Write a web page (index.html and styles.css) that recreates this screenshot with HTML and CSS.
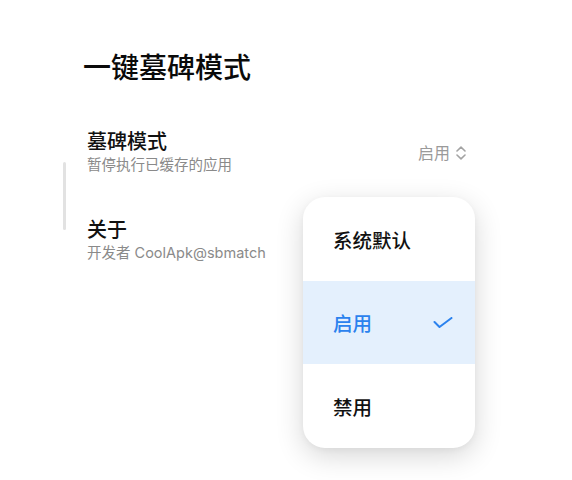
FILE: index.html
```html
<!DOCTYPE html>
<html lang="zh-CN">
<head>
<meta charset="utf-8">
<title>一键墓碑模式</title>
<link rel="stylesheet" href="styles.css">
</head>
<body>
<div class="page">
  <h1 class="title">一键墓碑模式</h1>
  <div class="list">
    <div class="row">
      <div class="row-text">
        <div class="row-title">墓碑模式</div>
        <div class="row-sub">暂停执行已缓存的应用</div>
      </div>
      <div class="row-value">
        <span>启用</span>
        <svg class="updown" width="10" height="14" viewBox="0 0 10 14"><path d="M1 5 L5 1.2 L9 5 M1 9 L5 12.8 L9 9" fill="none" stroke="#a3a3a3" stroke-width="1.6" stroke-linecap="round" stroke-linejoin="round"/></svg>
      </div>
    </div>
    <div class="row">
      <div class="row-text">
        <div class="row-title">关于</div>
        <div class="row-sub">开发者 CoolApk@sbmatch</div>
      </div>
    </div>
  </div>
  <div class="scrollbar"></div>
  <div class="menu">
    <div class="menu-item">系统默认</div>
    <div class="menu-item selected">启用
      <svg class="check" width="20" height="12" viewBox="0 0 20 12"><path d="M1.5 5 L6.5 10 L18.5 1" fill="none" stroke="#2b82ee" stroke-width="2" stroke-linecap="round" stroke-linejoin="round"/></svg>
    </div>
    <div class="menu-item">禁用</div>
  </div>
</div>
</body>
</html>
```

FILE: styles.css
```css
html, body {
  margin: 0;
  padding: 0;
  background: #ffffff;
}
body {
  font-family: "Inter", "Noto Sans CJK SC", sans-serif;
  width: 572px;
  height: 480px;
  overflow: hidden;
}
.page {
  position: relative;
  padding-top: 50px;
  height: 430px;
}
.title {
  margin: 0 0 23px 83px;
  font-size: 28px;
  line-height: 36px;
  font-weight: 500;
  color: #0a0a0a;
}
.list {
  display: flex;
  flex-direction: column;
}
.row {
  display: flex;
  align-items: center;
  justify-content: space-between;
  padding: 21px 106px 22px 87px;
}
.row-title {
  font-size: 20px;
  line-height: 24px;
  font-weight: 500;
  color: #111111;
}
.row-sub {
  margin-top: 1px;
  font-size: 14.5px;
  line-height: 20px;
  color: #8a8a8a;
}
.row-value {
  display: flex;
  align-items: center;
  gap: 6px;
  font-size: 16px;
  line-height: 20px;
  color: #9a9a9a;
}
.scrollbar {
  position: absolute;
  left: 63px;
  top: 162px;
  width: 3px;
  height: 68px;
  border-radius: 2px;
  background: #e2e2e2;
}
.menu {
  position: absolute;
  left: 303px;
  top: 197px;
  width: 172px;
  border-radius: 22px;
  background: #ffffff;
  overflow: hidden;
  box-shadow: 0 8px 28px rgba(0, 0, 0, 0.16), 0 2px 6px rgba(0, 0, 0, 0.04);
  display: flex;
  flex-direction: column;
}
.menu-item {
  height: 84px;
  display: flex;
  align-items: center;
  justify-content: space-between;
  padding: 0 22px 0 30px;
  font-size: 19.5px;
  font-weight: 500;
  color: #111111;
}
.menu-item.selected {
  height: 83px;
  background: #e4f0fd;
  color: #2b82ee;
}
```
